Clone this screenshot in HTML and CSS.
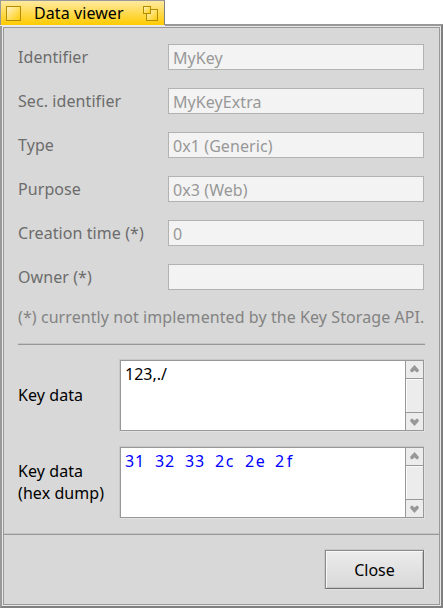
FILE: index.html
```html
<!DOCTYPE html>
<html lang="en">
<head>
<meta charset="utf-8">
<title>Data viewer</title>
<link rel="stylesheet" href="styles.css">
</head>
<body>
<header class="tab">
  <svg width="15" height="15" viewBox="0 0 15 15"><defs><linearGradient id="g" x1="0" y1="0" x2="1" y2="1"><stop offset="0" stop-color="#fff3cc"/><stop offset="1" stop-color="#ffcb00"/></linearGradient></defs><rect x=".5" y=".5" width="14" height="14" fill="url(#g)" stroke="#b18e00"/></svg>
  <h1>Data viewer</h1>
  <svg width="15" height="15" viewBox="0 0 15 15"><rect x="3.5" y="3.5" width="11" height="11" fill="url(#g)" stroke="#b18e00"/><rect x=".5" y=".5" width="7" height="7" fill="url(#g)" stroke="#b18e00"/></svg>
</header>
<main class="frame">
  <div class="panel">
    <section class="fields">
      <label>Identifier</label><div class="input">MyKey</div>
      <label>Sec. identifier</label><div class="input">MyKeyExtra</div>
      <label>Type</label><div class="input">0x1 (Generic)</div>
      <label>Purpose</label><div class="input">0x3 (Web)</div>
      <label>Creation time (*)</label><div class="input">0</div>
      <label>Owner (*)</label><div class="input"></div>
    </section>
    <p class="note">(*) currently not implemented by the Key Storage API.</p>
    <hr>
    <section class="data">
      <label>Key data</label>
      <div class="bevel"><div class="area"><div class="text">123,./</div>
        <div class="scroll"><svg viewBox="0 0 17 17"><path d="M8.500 4 13 9 12 11.300H10.500L8.500 9.500 6.500 11.300H5L4 9z"/></svg><i></i><svg viewBox="0 0 17 17"><path d="M8.500 13 4 8 5 5.700H6.500L8.500 7.500 10.500 5.700H12L13 8z"/></svg></div></div></div>
      <label>Key data<br>(hex dump)</label>
      <div class="bevel"><div class="area"><div class="text hex"><span>31</span><span>32</span><span>33</span><span class="alpha">2c</span><span class="alpha">2e</span><span class="alpha wide">2f</span></div>
        <div class="scroll"><svg viewBox="0 0 17 17"><path d="M8.500 4 13 9 12 11.300H10.500L8.500 9.500 6.500 11.300H5L4 9z"/></svg><i></i><svg viewBox="0 0 17 17"><path d="M8.500 13 4 8 5 5.700H6.500L8.500 7.500 10.500 5.700H12L13 8z"/></svg></div></div></div>
    </section>
    <footer><div class="bevel"><button>Close</button></div></footer>
  </div>
</main>
</body>
</html>
```
FILE: styles.css
```css
* { box-sizing: border-box; }
body { margin: 0; width: 443px; height: 608px; overflow: hidden; background: #fff; font: 16px/22px "Noto Sans", sans-serif; color: #000; display: flex; flex-direction: column; }
svg { display: block; }
.tab { width: 165px; height: 25px; margin-bottom: -1px; z-index: 1; flex: none; display: flex; align-items: center; padding: 1px 6px 0 5px; border: 1px solid #999; border-right-color: #808080; border-bottom: 0; background: linear-gradient(#ffe9a0, #ffcb00); box-shadow: 0 1px #e8e8e8; }
.tab h1 { flex: 1; margin: 0 0 0 13px; font-size: 16px; font-weight: 400; line-height: 21px; letter-spacing: .08px; }
.frame { flex: 1; border: 2px solid; border-color: #999 #808080 #808080 #999; padding: 1px; background: #e8e8e8; }
.panel { height: 100%; border: 1px solid #999; background: #d8d8d8; display: flex; flex-direction: column; }
.fields { display: grid; grid-template-columns: 150px 256px; row-gap: 18px; padding: 16px 0 0 14px; }
.fields label { color: #6c6c6c; line-height: 26px; letter-spacing: .08px; }
.input { height: 26px; border: 1px solid #b2b2b2; background: #f3f3f3; color: #989898; padding: 1px 4px; line-height: 25px; letter-spacing: .08px; }
.note { margin: 16px 0 0 14px; color: #838383; line-height: 22px; white-space: nowrap; letter-spacing: .08px; }
hr { width: 407px; height: 2px; margin: 15px 0 0 14px; border: 0; border-top: 1px solid #c4c4c4; border-bottom: 1px solid #989898; }
.data { display: grid; grid-template-columns: 101px 306px; row-gap: 14px; align-items: center; margin: 14px 0 0 14px; }
.data label { padding-bottom: 2px; letter-spacing: .08px; }
.bevel { border: 1px solid; border-color: #c8c8c8 #e2e2e2 #e2e2e2 #c8c8c8; }
.area { height: 71px; border: 1px solid #989898; background: #fff; display: flex; }
.text { flex: 1; padding: 2px 4px; }
.hex { color: #00f; letter-spacing: .85px; }
.hex span { display: inline-block; width: 30px; }
.hex .alpha { letter-spacing: 1.5px; }
.hex .wide { letter-spacing: 2.5px; }
.scroll { width: 18px; border-left: 1px solid #989898; background: #ececec; display: flex; flex-direction: column; }
.scroll svg { width: 17px; height: 17px; fill: #989898; }
.scroll i { flex: 1; border: solid #989898; border-width: 1px 0; box-shadow: inset 1px 1px #fafafa; }
footer { flex: 1; margin-top: 14px; border-top: 1px solid #c4c4c4; box-shadow: inset 0 1px #989898; display: flex; justify-content: flex-end; align-items: flex-start; padding: 15px 14px 0 0; }
button { display: block; width: 99px; height: 39px; padding: 0; border: 1px solid; border-color: #8c8c8c #707070 #707070 #8c8c8c; box-shadow: inset 1px 1px #f8f8f8, inset -1px -1px #c4c4c4; background: linear-gradient(#ececec, #d8d8d8); font: inherit; color: #000; }
```
